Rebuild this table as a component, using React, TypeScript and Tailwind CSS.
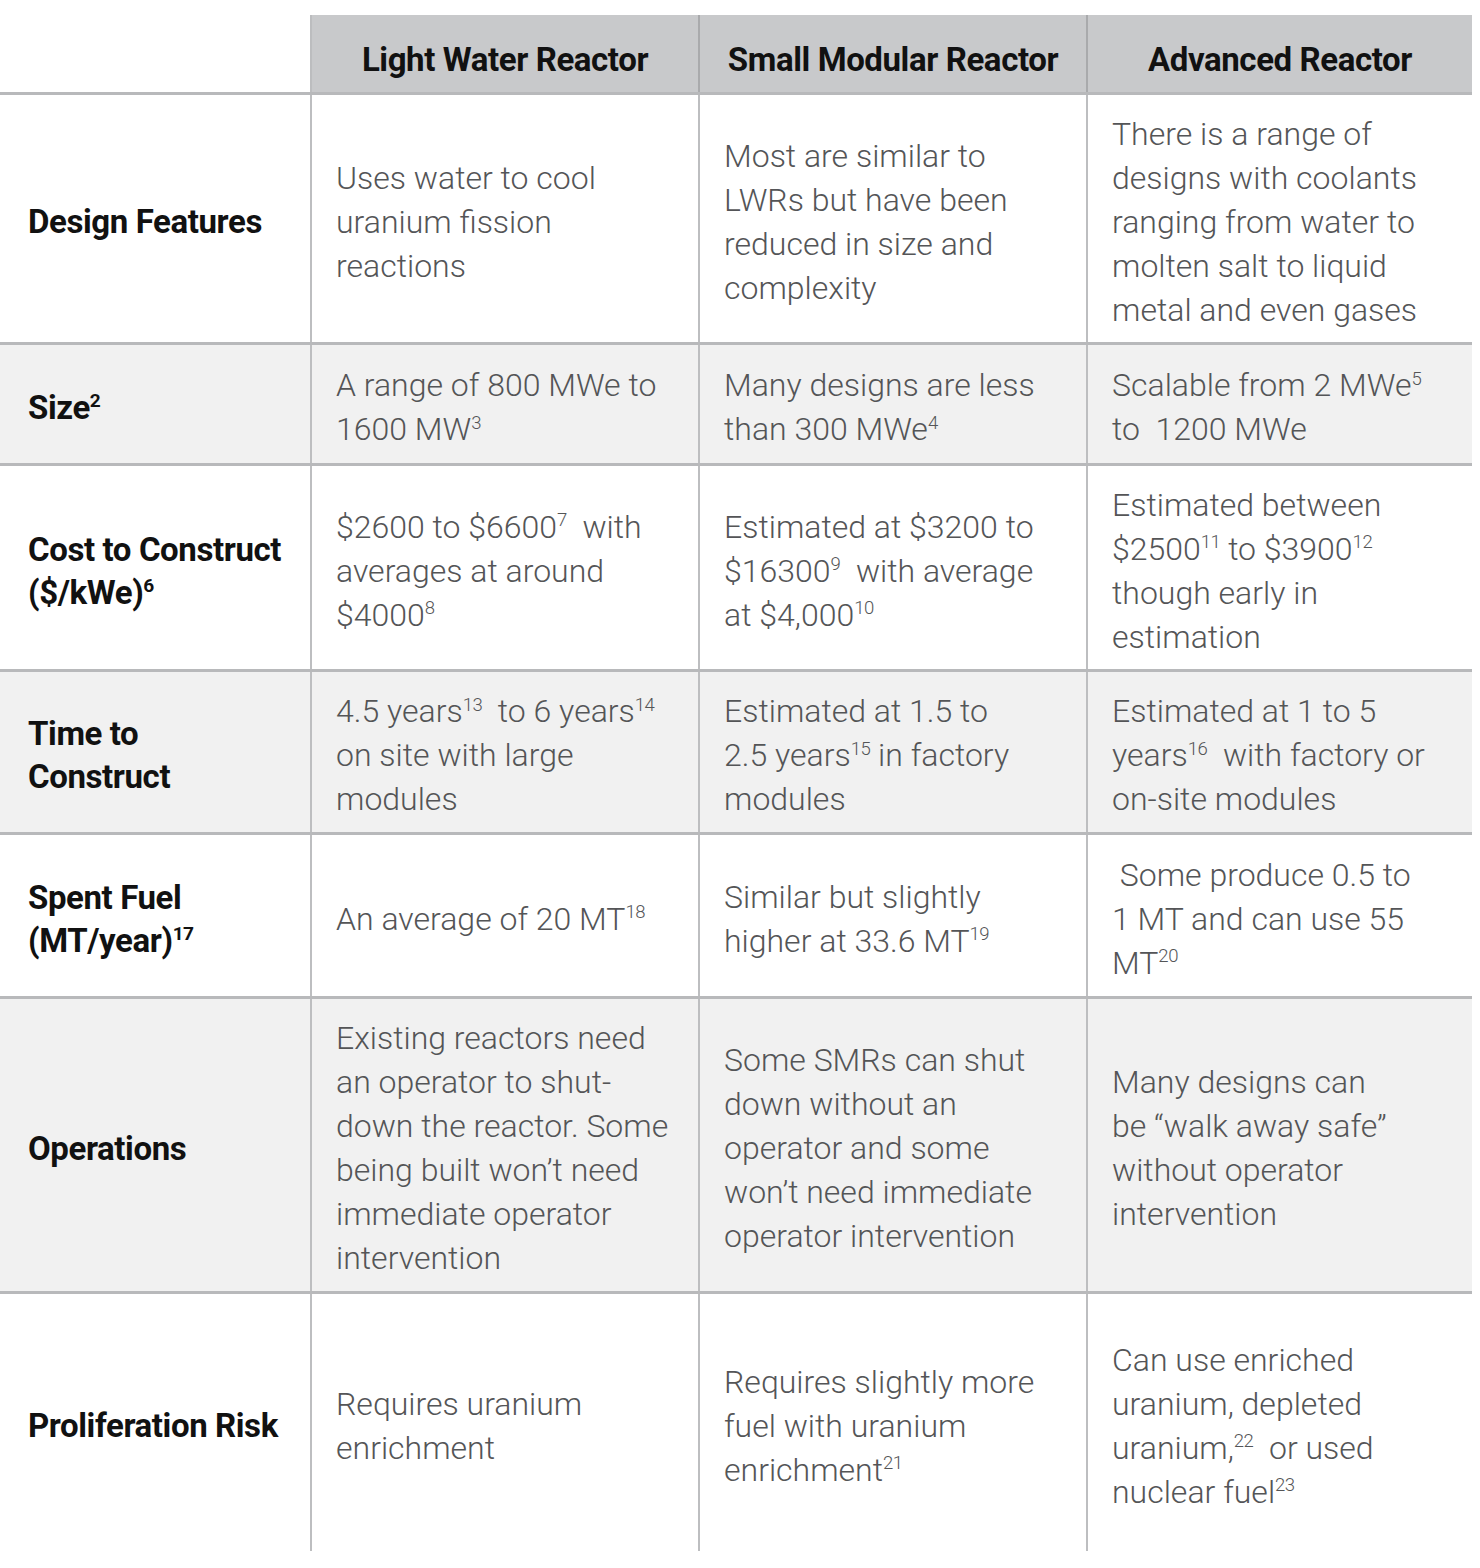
import React from "react";

const S = ({ children }: { children: React.ReactNode }) => (
  <sup className="text-[0.58em] top-[-0.62em] leading-none tracking-[-0.5px]">{children}</sup>
);

type Row = {
  label: React.ReactNode;
  h: string;
  gray: boolean;
  cells: React.ReactNode[];
};

const rows: Row[] = [
  {
    label: <>Design Features</>,
    h: "h-[250px]",
    gray: false,
    cells: [
      <>Uses water to cool<br />uranium fission<br />reactions</>,
      <>Most are similar to<br />LWRs but have been<br />reduced in size and<br />complexity</>,
      <>There is a range of<br />designs with coolants<br />ranging from water to<br />molten salt to liquid<br />metal and even gases</>,
    ],
  },
  {
    label: <>Size<S>2</S></>,
    h: "h-[121px]",
    gray: true,
    cells: [
      <>A range of 800 MWe to<br />1600 MW<S>3</S></>,
      <>Many designs are less<br />than 300 MWe<S>4</S></>,
      <>Scalable from 2 MWe<S>5</S><br />to&nbsp; 1200 MWe</>,
    ],
  },
  {
    label: <>Cost to Construct<br />($/kWe)<S>6</S></>,
    h: "h-[206px]",
    gray: false,
    cells: [
      <>$2600 to $6600<S>7</S>&nbsp; with<br />averages at around<br />$4000<S>8</S></>,
      <>Estimated at $3200 to<br />$16300<S>9</S>&nbsp; with average<br />at $4,000<S>10</S></>,
      <>Estimated between<br />$2500<S>11</S> to $3900<S>12</S><br />though early in<br />estimation</>,
    ],
  },
  {
    label: <>Time to<br />Construct</>,
    h: "h-[163px]",
    gray: true,
    cells: [
      <>4.5 years<S>13</S>&nbsp; to 6 years<S>14</S><br />on site with large<br />modules</>,
      <>Estimated at 1.5 to<br />2.5 years<S>15</S> in factory<br />modules</>,
      <>Estimated at 1 to 5<br />years<S>16</S>&nbsp; with factory or<br />on-site modules</>,
    ],
  },
  {
    label: <>Spent Fuel<br />(MT/year)<S>17</S></>,
    h: "h-[164px]",
    gray: false,
    cells: [
      <>An average of 20 MT<S>18</S></>,
      <>Similar but slightly<br />higher at 33.6 MT<S>19</S></>,
      <>&nbsp;Some produce 0.5 to<br />1 MT and can use 55<br />MT<S>20</S></>,
    ],
  },
  {
    label: <>Operations</>,
    h: "h-[295px]",
    gray: true,
    cells: [
      <>Existing reactors need<br />an operator to shut-<br />down the reactor. Some<br />being built won’t need<br />immediate operator<br />intervention</>,
      <>Some SMRs can shut<br />down without an<br />operator and some<br />won’t need immediate<br />operator intervention</>,
      <>Many designs can<br />be “walk away safe”<br />without operator<br />intervention</>,
    ],
  },
  {
    label: <>Proliferation Risk</>,
    h: "h-[260px]",
    gray: false,
    cells: [
      <>Requires uranium<br />enrichment</>,
      <>Requires slightly more<br />fuel with uranium<br />enrichment<S>21</S></>,
      <>Can use enriched<br />uranium, depleted<br />uranium,<S>22</S>&nbsp; or used<br />nuclear fuel<S>23</S></>,
    ],
  },
];

export default function App() {
  return (
    <div
      className="w-[1480px] min-h-[1568px] bg-white pt-[15px]"
      style={{ fontFamily: "Roboto, 'Noto Sans', sans-serif" }}
    >
      <div className="w-[1472px]">
        {/* header */}
        <div className="grid grid-cols-[310px_388px_388px_386px] h-[77px]">
          <div />
          {["Light Water Reactor", "Small Modular Reactor", "Advanced Reactor"].map((t, i) => (
            <div
              key={t}
              className={`bg-[#c8c9cb] flex items-center justify-center pt-[12px] text-[33px] font-bold text-[#111] tracking-[-0.4px] ${
                i === 0 ? "border-l-2 border-[#bcbdbf]" : "border-l-2 border-[#a9aaac]"
              }`}
            >
              {t}
            </div>
          ))}
        </div>
        {rows.map((r, idx) => (
          <div
            key={idx}
            className={`grid grid-cols-[310px_388px_388px_386px] border-t-[3px] border-[#b8b9bb] ${r.h} ${
              r.gray ? "bg-[#f1f1f1]" : "bg-white"
            }`}
          >
            <div className="flex items-center pl-[28px] pt-[6px] text-[33px] font-bold text-[#111] leading-[43px] tracking-[-0.4px] whitespace-nowrap">
              <div>{r.label}</div>
            </div>
            {r.cells.map((c, j) => (
              <div
                key={j}
                className="flex items-center border-l-2 border-[#bdbec0] pl-[24px] pt-[6px] text-[32px] font-light text-[#545557] leading-[44px] tracking-[0px] whitespace-nowrap"
              >
                <div>{c}</div>
              </div>
            ))}
          </div>
        ))}
      </div>
    </div>
  );
}
